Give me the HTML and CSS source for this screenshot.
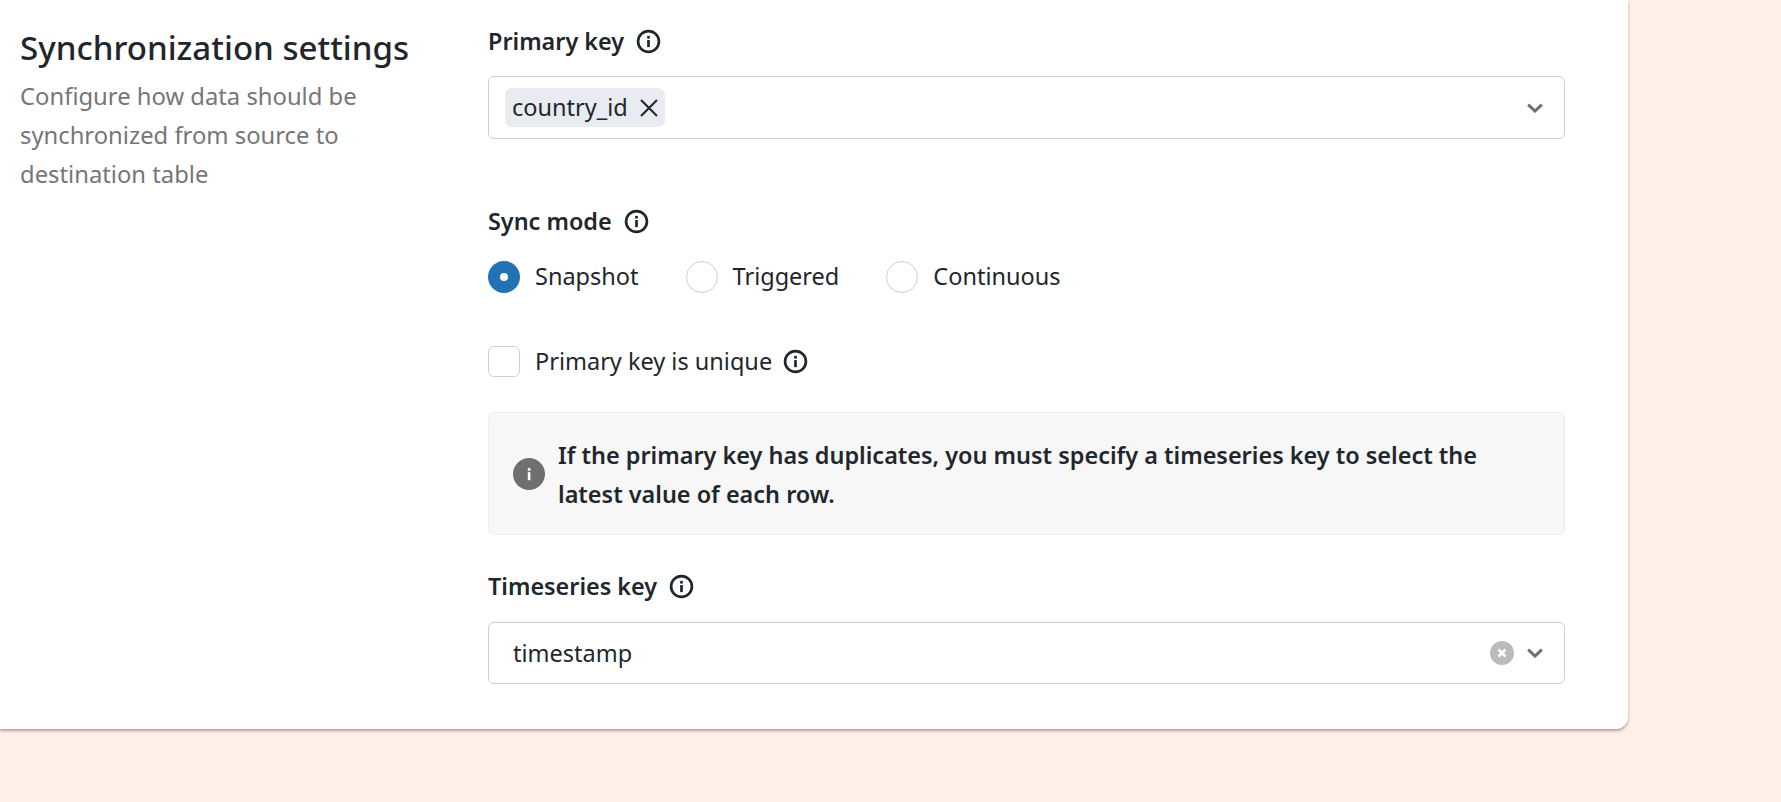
FILE: index.html
```html
<!DOCTYPE html>
<html lang="en">
<head>
<meta charset="utf-8">
<title>Synchronization settings</title>
<link rel="stylesheet" href="styles.css">
</head>
<body>
<svg class="defs" width="0" height="0" aria-hidden="true">
  <symbol id="info" viewBox="0 0 24 24">
    <circle cx="12" cy="12" r="10" fill="none" stroke="currentColor" stroke-width="2.6"/>
    <rect x="10.7" y="10.6" width="2.6" height="6.8" fill="currentColor"/>
    <rect x="10.7" y="6.6" width="2.6" height="2.6" fill="currentColor"/>
  </symbol>
  <symbol id="chevron" viewBox="0 0 16 10">
    <path d="M1.2 1.6 8 8l6.8-6.4" fill="none" stroke="currentColor" stroke-width="3"/>
  </symbol>
</svg>
<main class="card">
  <section class="intro">
    <h2 class="title">Synchronization settings</h2>
    <p class="desc">Configure how data should be synchronized from source to destination table</p>
  </section>
  <section class="form">
    <div class="label-row">
      <span class="label">Primary key</span>
      <svg class="info"><use href="#info"/></svg>
    </div>
    <div class="select select-tall">
      <span class="chip">country_id
        <svg class="chip-x" viewBox="0 0 20 20"><path d="M2 2l16 16M18 2 2 18" fill="none" stroke="currentColor" stroke-width="2.1"/></svg>
      </span>
      <svg class="chevron"><use href="#chevron"/></svg>
    </div>

    <div class="label-row sync-label">
      <span class="label">Sync mode</span>
      <svg class="info"><use href="#info"/></svg>
    </div>
    <div class="radios">
      <label class="option"><span class="radio radio-on"></span>Snapshot</label>
      <label class="option"><span class="radio"></span>Triggered</label>
      <label class="option"><span class="radio"></span>Continuous</label>
    </div>

    <div class="option unique">
      <span class="checkbox"></span>Primary key is unique
      <svg class="info info-inline"><use href="#info"/></svg>
    </div>

    <div class="notice">
      <svg class="notice-icon" viewBox="0 0 32 32">
        <circle cx="16" cy="16" r="16" fill="currentColor"/>
        <rect x="14.8" y="14.2" width="2.6" height="8" fill="#fff"/>
        <rect x="14.8" y="10" width="2.6" height="2.8" fill="#fff"/>
      </svg>
      <p class="notice-text">If the primary key has duplicates, you must specify a timeseries key to select the latest value of each row.</p>
    </div>

    <div class="label-row ts-label">
      <span class="label">Timeseries key</span>
      <svg class="info"><use href="#info"/></svg>
    </div>
    <div class="select">
      <span class="value">timestamp</span>
      <svg class="clear" viewBox="0 0 24 24">
        <circle cx="12" cy="12" r="12" fill="currentColor"/>
        <path d="M8.5 8.5l7 7M15.5 8.5l-7 7" fill="none" stroke="#fff" stroke-width="2.6"/>
      </svg>
      <svg class="chevron chevron-near"><use href="#chevron"/></svg>
    </div>
  </section>
</main>
</body>
</html>
```
FILE: styles.css
```css
* { box-sizing: border-box; }
html, body { margin: 0; height: 100%; }
body {
  background: #fff0e7;
  color: #1f272d;
  font-family: "Noto Sans", "Open Sans", sans-serif;
  font-size: 23.5px;
  line-height: 39px;
  overflow: hidden;
}
.defs { position: absolute; }
.card {
  width: 1628px;
  height: 729px;
  display: flex;
  background: #fff;
  border-radius: 0 0 12px 0;
  box-shadow: 0 2px 3px rgba(60, 40, 30, 0.4);
}
.intro { width: 488px; padding: 29px 0 0 20px; }
.title {
  margin: 0 0 10px;
  font-size: 33.1px;
  font-weight: 500;
  line-height: 38px;
}
.desc { margin: 0; width: 350px; color: #767676; font-size: 23.8px; }
.form { width: 1077px; padding-top: 22px; }
.label-row { display: flex; align-items: center; height: 39px; gap: 12px; }
.label { font-weight: 600; font-size: 23.4px; }
.info { width: 25px; height: 25px; flex: none; color: #1f272d; }
.info-inline { margin-left: 11px; }
.select {
  display: flex;
  align-items: center;
  height: 62px;
  margin-top: 16px;
  padding: 0 21px 0 24px;
  border: 1px solid #cdcdcd;
  border-radius: 6px;
}
.select-tall { height: 63px; margin-top: 15px; padding-left: 16px; }
.chip {
  display: flex;
  align-items: center;
  gap: 11px;
  height: 39px;
  padding: 0 6px 0 7px;
  background: #e8ebef;
  border-radius: 7px;
}
.chip-x { width: 20px; height: 20px; color: #1f272d; }
.value { flex: 1; }
.chevron { width: 16px; height: 10px; margin-left: auto; color: #6f6f6f; }
.chevron-near { margin-left: 13px; }
.clear { width: 24px; height: 24px; color: #bbb; }
.sync-label { margin-top: 63px; }
.radios { display: flex; gap: 47px; margin-top: 16px; }
.option { display: flex; align-items: center; height: 39px; }
.radio {
  width: 32px;
  height: 32px;
  margin-right: 15px;
  border: 1px solid #cfcfcf;
  border-radius: 50%;
  background: #fff;
}
.radio-on {
  border: 12px solid #2272b4;
}
.unique { margin-top: 46px; }
.checkbox {
  width: 32px;
  height: 31px;
  margin-right: 15px;
  border: 1px solid #cfcfcf;
  border-radius: 6px;
}
.notice {
  display: flex;
  align-items: center;
  gap: 13px;
  height: 123px;
  margin-top: 31px;
  padding: 0 24px;
  background: #f7f7f7;
  border: 1px solid #eeeeee;
  border-radius: 6px;
}
.notice-icon { width: 32px; height: 32px; flex: none; color: #6f6f6f; }
.notice-text { margin: 2px 0 0; font-weight: 600; font-size: 23.45px; }
.ts-label { margin-top: 32px; }
```
